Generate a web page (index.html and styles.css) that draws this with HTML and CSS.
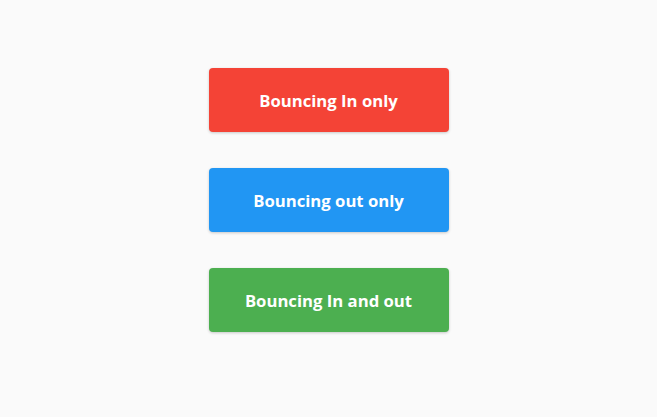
FILE: index.html
```html
<!DOCTYPE html>
<html>
<head>
<meta charset="utf-8">
<link rel="stylesheet" href="styles.css">
</head>
<body>
<div class="stack">
  <button class="btn btn-red">Bouncing In only</button>
  <button class="btn btn-blue">Bouncing out only</button>
  <button class="btn btn-green">Bouncing In and out</button>
</div>
</body>
</html>
```
FILE: styles.css
```css
html, body {
  margin: 0;
  padding: 0;
  background: #fafafa;
  height: 100%;
}
.stack {
  display: flex;
  flex-direction: column;
  align-items: center;
  gap: 36px;
  padding-top: 68px;
}
.btn {
  width: 240px;
  height: 64px;
  border: none;
  border-radius: 4px;
  color: #fff;
  font-family: "Open Sans", sans-serif;
  font-weight: 700;
  font-size: 16.7px;
  line-height: 1;
  padding: 2px 0 0 0;
  box-shadow: 0 1px 3px rgba(0,0,0,0.2);
  margin: 0;
  cursor: pointer;
}
.btn-red { background: #f44336; }
.btn-blue { background: #2196f3; }
.btn-green { background: #4caf50; }
```
